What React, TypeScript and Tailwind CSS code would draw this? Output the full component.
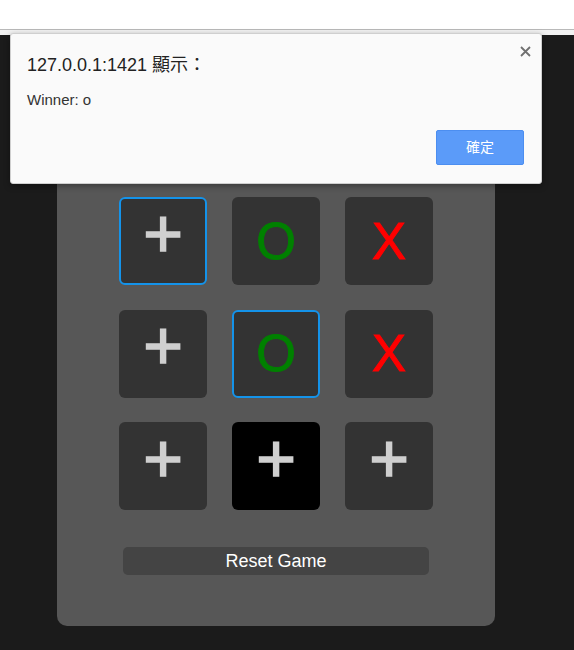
import React from 'react';

type Cell = '+' | 'o' | 'x';

const board: Cell[] = ['+', 'o', 'x', '+', 'o', 'x', '+', '+', '+'];
const focused = [0, 4];
const active = 7;

function Square({ value, index }: { value: Cell; index: number }) {
  const ring = focused.includes(index) ? 'border-2 border-[#1493ea]' : 'border-2 border-transparent';
  const bg = index === active ? 'bg-black' : 'bg-[#333333]';

  return (
    <div className={`flex h-[88px] w-[88px] items-center justify-center rounded-[6px] ${bg} ${ring}`}>
      {value === '+' && (
        <span className="mb-[17px] text-[68px] leading-none text-[#cfcfcf] [-webkit-text-stroke:1.5px_#cfcfcf]">+</span>
      )}
      {value === 'o' && (
        <span className="text-[51px] leading-none text-[#008000] [-webkit-text-stroke:1px_#008000]">O</span>
      )}
      {value === 'x' && (
        <span className="text-[51px] leading-none text-[#ff0000] [-webkit-text-stroke:1px_#ff0000]">X</span>
      )}
    </div>
  );
}

export default function App() {
  return (
    <div className="relative h-[650px] w-[574px] overflow-hidden bg-[#1b1b1b] font-['Liberation_Sans','Noto_Sans_CJK_TC',sans-serif]">
      {/* browser chrome strip */}
      <div className="h-[29px] bg-white" />
      <div className="h-px bg-[#b9b9b9]" />
      <div className="h-[5px] bg-[#f2f2f2]" />

      {/* game panel */}
      <div className="flex w-[552px] justify-center">
        <div className="mt-[105px] flex w-[438px] flex-col items-center rounded-[10px] bg-[#575757] pt-[57px] pb-[51px]">
          <div className="grid grid-cols-[repeat(3,88px)] gap-x-[25px] gap-y-[24.5px]">
            {board.map((v, i) => (
              <Square key={i} value={v} index={i} />
            ))}
          </div>
          <button className="mt-[37px] flex h-[28px] w-[306px] items-center justify-center rounded-[5px] bg-[#444444] text-[18px] text-white">
            Reset Game
          </button>
        </div>
      </div>

      {/* alert dialog */}
      <div className="absolute left-[10px] top-[33px] h-[151px] w-[532px] rounded-[3px] border border-[#cfcfcf] bg-[#fafafa] shadow-[0_2px_6px_rgba(0,0,0,0.35)]">
        <button className="absolute right-[10px] top-[11px] flex h-[12px] w-[12px] items-center justify-center">
          <svg width="11" height="11" viewBox="0 0 11 11">
            <path d="M1 1 L10 10 M10 1 L1 10" stroke="#707070" strokeWidth="1.8" />
          </svg>
        </button>
        <div className="pl-[16px] pt-[19px] text-[18px] leading-[24px] text-[#222222]">127.0.0.1:1421 顯示：</div>
        <div className="mt-[14px] pl-[16px] text-[15px] leading-[18px] text-[#333333]">Winner: o</div>
        <div className="mt-[21px] flex justify-end pr-[17px]">
          <button className="flex h-[35px] w-[88px] items-center justify-center rounded-[2px] border border-[#4c8ef0] bg-[#5b9bf9] text-[14px] text-white">
            確定
          </button>
        </div>
      </div>
    </div>
  );
}
